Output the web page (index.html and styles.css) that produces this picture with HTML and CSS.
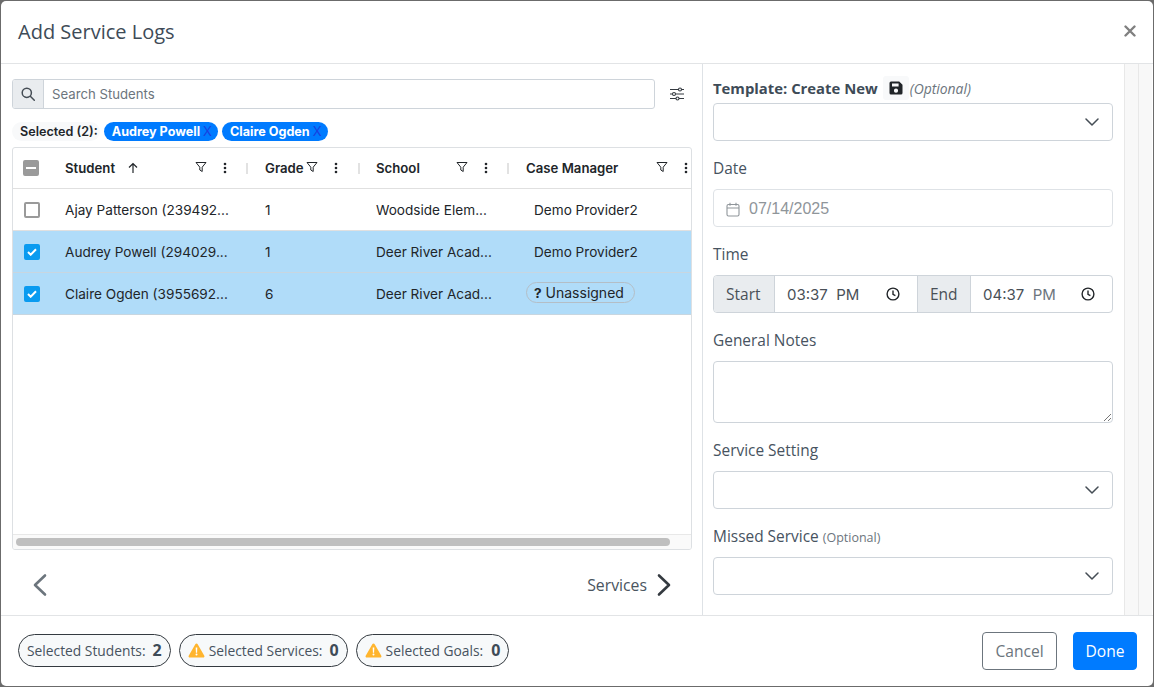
FILE: index.html
```html
<!DOCTYPE html>
<html lang="en">
<head>
<meta charset="utf-8">
<title>Add Service Logs</title>
<link rel="stylesheet" href="styles.css">
</head>
<body>
<div class="modal">
  <header class="modal-head">
    <h1>Add Service Logs</h1>
    <svg class="close" width="12" height="12" viewBox="0 0 12 12"><path d="M1.5 1.5l9 9M10.5 1.5l-9 9" stroke="#808080" stroke-width="2.4" stroke-linecap="round"/></svg>
  </header>
  <div class="modal-body">
    <section class="left">
      <div class="search-row">
        <div class="search">
          <span class="search-icon"><svg width="14" height="14" viewBox="0 0 14 14" fill="none" stroke="#454d55" stroke-width="1.5"><circle cx="5.8" cy="5.8" r="4.6"/><path d="M9.3 9.3l4 4" stroke-linecap="round"/></svg></span>
          <span class="search-input">Search Students</span>
        </div>
        <svg class="sliders" width="16" height="16" viewBox="0 0 16 16" fill="none" stroke="#343a40" stroke-width="1.1"><path d="M1 3.5h8.5M12.5 3.5H15M1 8h2.5M6.5 8H15M1 12.5h6M10 12.5h5"/><circle cx="11" cy="3.5" r="1.5"/><circle cx="5" cy="8" r="1.5"/><circle cx="8.5" cy="12.5" r="1.5"/></svg>
      </div>
      <div class="chips">
        <span class="chip-label">Selected (2):</span>
        <span class="chip">Audrey Powell<span class="chip-x">X</span></span>
        <span class="chip">Claire Ogden<span class="chip-x">X</span></span>
      </div>
      <div class="table">
        <div class="row head">
          <div class="cell check"><span class="box mixed"></span></div>
          <div class="cell student"><b>Student</b>
            <svg class="arrow" width="12" height="12" viewBox="0 0 12 12" fill="none" stroke="#212529" stroke-width="1.2"><path d="M6 11V1.5M2 5.5l4-4 4 4"/></svg>
            <svg class="funnel" width="12" height="12" viewBox="0 0 12 12" fill="none" stroke="#212529" stroke-width="1"><path d="M1 1.500h10L7.200 6.200V10.500L4.800 9V6.200z"/></svg>
            <svg class="dots" width="4" height="12" viewBox="0 0 4 12" fill="#212529"><circle cx="2" cy="2" r="1.3"/><circle cx="2" cy="6" r="1.3"/><circle cx="2" cy="10" r="1.3"/></svg>
            <i class="sep"></i></div>
          <div class="cell grade"><b>Grade</b>
            <svg class="funnel near" width="12" height="12" viewBox="0 0 12 12" fill="none" stroke="#212529" stroke-width="1"><path d="M1 1.500h10L7.200 6.200V10.500L4.800 9V6.200z"/></svg>
            <svg class="dots" width="4" height="12" viewBox="0 0 4 12" fill="#212529"><circle cx="2" cy="2" r="1.3"/><circle cx="2" cy="6" r="1.3"/><circle cx="2" cy="10" r="1.3"/></svg>
            <i class="sep"></i></div>
          <div class="cell school"><b>School</b>
            <svg class="funnel" width="12" height="12" viewBox="0 0 12 12" fill="none" stroke="#212529" stroke-width="1"><path d="M1 1.500h10L7.200 6.200V10.500L4.800 9V6.200z"/></svg>
            <svg class="dots" width="4" height="12" viewBox="0 0 4 12" fill="#212529"><circle cx="2" cy="2" r="1.3"/><circle cx="2" cy="6" r="1.3"/><circle cx="2" cy="10" r="1.3"/></svg>
            <i class="sep"></i></div>
          <div class="cell manager"><b>Case Manager</b>
            <svg class="funnel" width="12" height="12" viewBox="0 0 12 12" fill="none" stroke="#212529" stroke-width="1"><path d="M1 1.500h10L7.200 6.200V10.500L4.800 9V6.200z"/></svg>
            <svg class="dots" width="4" height="12" viewBox="0 0 4 12" fill="#212529"><circle cx="2" cy="2" r="1.3"/><circle cx="2" cy="6" r="1.3"/><circle cx="2" cy="10" r="1.3"/></svg>
          </div>
        </div>
        <div class="row">
          <div class="cell check"><span class="box"></span></div>
          <div class="cell student">Ajay Patterson (239492...</div>
          <div class="cell grade">1</div>
          <div class="cell school">Woodside Elem...</div>
          <div class="cell manager"><span class="provider">Demo Provider2</span></div>
        </div>
        <div class="row on">
          <div class="cell check"><span class="box checked"><svg width="10" height="8" viewBox="0 0 10 8" fill="none" stroke="#fff" stroke-width="2"><path d="M1 4l2.700 2.700L9 1.200"/></svg></span></div>
          <div class="cell student">Audrey Powell (294029...</div>
          <div class="cell grade">1</div>
          <div class="cell school">Deer River Acad...</div>
          <div class="cell manager"><span class="provider">Demo Provider2</span></div>
        </div>
        <div class="row on">
          <div class="cell check"><span class="box checked"><svg width="10" height="8" viewBox="0 0 10 8" fill="none" stroke="#fff" stroke-width="2"><path d="M1 4l2.700 2.700L9 1.200"/></svg></span></div>
          <div class="cell student">Claire Ogden (3955692...</div>
          <div class="cell grade">6</div>
          <div class="cell school">Deer River Acad...</div>
          <div class="cell manager"><span class="unassigned"><b>?</b> Unassigned</span></div>
        </div>
        <div class="spacer"></div>
        <div class="hscroll"><span class="thumb"></span></div>
      </div>
      <nav class="pager">
        <svg width="16" height="24" viewBox="0 0 16 24" fill="none" stroke="#6c757d" stroke-width="2.6" stroke-linecap="round" stroke-linejoin="round"><path d="M13 2.500L3 12l10 9.500"/></svg>
        <span class="next">Services
          <svg width="16" height="24" viewBox="0 0 16 24" fill="none" stroke="#343a40" stroke-width="2.6" stroke-linecap="round" stroke-linejoin="round"><path d="M3 2.500L13 12 3 21.500"/></svg>
        </span>
      </nav>
    </section>
    <section class="right">
      <div class="template-label">
        <strong>Template: Create New</strong>
        <span class="save"><svg width="14" height="14" viewBox="0 0 14 14"><path fill="#212529" fill-rule="evenodd" d="M2 .5h8.200L13.500 3.800V12a1.500 1.500 0 0 1-1.500 1.500H2A1.500 1.500 0 0 1 .5 12V2A1.500 1.500 0 0 1 2 .5zM3 2.400v3h6.600v-3zM7 7.600a2.100 2.100 0 1 0 0 4.200 2.100 2.100 0 0 0 0-4.200z"/></svg></span>
        <em>(Optional)</em>
      </div>
      <div class="select"><svg width="14" height="8" viewBox="0 0 14 8" fill="none" stroke="#454d55" stroke-width="1.5" stroke-linecap="round" stroke-linejoin="round"><path d="M1 1l6 6 6-6"/></svg></div>
      <label class="label">Date</label>
      <div class="field date">
        <svg width="14" height="15" viewBox="0 0 14 15" fill="none" stroke="#8f959a" stroke-width="1.1"><rect x="1" y="2.500" width="12" height="11.500" rx="1.500"/><path d="M1 6h12M4 .8v3M10 .8v3"/></svg>
        <span>07/14/2025</span>
      </div>
      <label class="label">Time</label>
      <div class="time">
        <span class="addon">Start</span>
        <span class="time-val"><span>03:37&nbsp; PM</span><svg width="14" height="14" viewBox="0 0 14 14" fill="none" stroke="#212529" stroke-width="1.4"><circle cx="7" cy="7" r="5.900"/><path d="M7 3.600V7.400l2.400 1.200"/></svg></span>
        <span class="addon end">End</span>
        <span class="time-val two"><span>04:37&nbsp; <span class="dim">PM</span></span><svg width="14" height="14" viewBox="0 0 14 14" fill="none" stroke="#212529" stroke-width="1.4"><circle cx="7" cy="7" r="5.900"/><path d="M7 3.600V7.400l2.400 1.200"/></svg></span>
      </div>
      <label class="label">General Notes</label>
      <div class="textarea"><svg width="8" height="8" viewBox="0 0 8 8" stroke="#666" stroke-width="0.9"><path d="M1 8l7-7M5 8l3-3"/></svg></div>
      <label class="label">Service Setting</label>
      <div class="select"><svg width="14" height="8" viewBox="0 0 14 8" fill="none" stroke="#454d55" stroke-width="1.5" stroke-linecap="round" stroke-linejoin="round"><path d="M1 1l6 6 6-6"/></svg></div>
      <label class="label">Missed Service <small>(Optional)</small></label>
      <div class="select"><svg width="14" height="8" viewBox="0 0 14 8" fill="none" stroke="#454d55" stroke-width="1.5" stroke-linecap="round" stroke-linejoin="round"><path d="M1 1l6 6 6-6"/></svg></div>
    </section>
    <div class="track"></div>
    <div class="track second"></div>
  </div>
  <footer class="modal-foot">
    <div class="pills">
      <span class="pill">Selected Students: <b>2</b></span>
      <span class="pill"><svg width="17" height="15" viewBox="0 0 17 15"><path fill="#ffb52e" d="M8.500.5c.5 0 .9.3 1.200.8l6.600 11.400c.5.900-.1 1.900-1.200 1.900H1.900C.8 14.600.2 13.600.7 12.700L7.300 1.300c.3-.5.7-.8 1.200-.8z"/><path fill="#fff" d="M7.700 4.500h1.600l-.2 5.200H7.900zM8.500 10.600a1 1 0 1 1 0 2 1 1 0 0 1 0-2z"/></svg>Selected Services: <b>0</b></span>
      <span class="pill"><svg width="17" height="15" viewBox="0 0 17 15"><path fill="#ffb52e" d="M8.500.5c.5 0 .9.3 1.200.8l6.600 11.400c.5.900-.1 1.900-1.200 1.900H1.900C.8 14.600.2 13.600.7 12.700L7.300 1.300c.3-.5.7-.8 1.200-.8z"/><path fill="#fff" d="M7.700 4.500h1.600l-.2 5.200H7.900zM8.500 10.600a1 1 0 1 1 0 2 1 1 0 0 1 0-2z"/></svg>Selected Goals: <b>0</b></span>
    </div>
    <div class="actions">
      <button class="btn cancel">Cancel</button>
      <button class="btn done">Done</button>
    </div>
  </footer>
</div>
</body>
</html>
```
FILE: styles.css
```css
* { box-sizing: border-box; }
html, body { margin: 0; height: 100%; }
body {
  width: 1154px; height: 687px; overflow: hidden;
  background: #6b6b6b; padding: 1px;
  font-family: "Open Sans", "Noto Sans", sans-serif; color: #212529;
}
.modal {
  width: 1152px; height: 685px; background: #fff; border-radius: 5px;
  display: flex; flex-direction: column; overflow: hidden;
}
.modal-head {
  height: 63px; flex: none; border-bottom: 1px solid #e2e4e6;
  display: flex; align-items: center; justify-content: space-between;
  padding: 0 17px 2px 17px;
}
h1 { margin: 0; font-size: 20px; font-weight: 400; color: #3e4b57; }
.modal-body { height: 551px; flex: none; display: flex; overflow: hidden; }
.left { width: 702px; flex: none; border-right: 1px solid #dee2e6; padding: 15px 10px 0 11px; }
.search-row { display: flex; align-items: center; gap: 14px; }
.search {
  flex: 1; height: 30px; display: flex; border: 1px solid #ced4da; border-radius: 3px; overflow: hidden;
}
.search-icon {
  width: 31px; background: #e9ecef; border-right: 1px solid #ced4da;
  display: flex; align-items: center; justify-content: center;
}
.search-input { font: 13.200px/28px Inter, sans-serif; color: #6c757d; padding-left: 8px; }
.sliders { flex: none; margin-right: 7px; }
.chips { display: flex; align-items: center; gap: 4px; height: 20px; margin: 12px 0 6px 0; }
.chip-label {
  font: 600 12.600px/19px Inter, sans-serif; background: #f8f9fa; padding: 0 2px 0 8px; border-radius: 10px; color: #212529;
}
.chip {
  font: 700 12.600px/19px Inter, sans-serif; color: #fff; background: #007bff; padding: 0 6px 0 8px;
  border-radius: 10px; height: 19px; white-space: nowrap;
}
.chip-x { color: #1a3fe0; font-weight: 400; font-size: 13px; margin-left: 3px; }
.table {
  width: 680px; height: 403px; border: 1px solid #dde0e3; border-radius: 3px;
  display: flex; flex-direction: column; font: 400 13.600px Inter, sans-serif; overflow: hidden;
}
.row {
  height: 42px; flex: none; display: grid; grid-template-columns: 40px 200px 111px 150px 1fr;
  border-bottom: 1px solid #e0e0e0; align-items: center;
}
.row.head { height: 41px; }
.row.on { background: #b0dcf9; border-bottom-color: #c8d6e0; }
.cell { display: flex; align-items: center; padding-left: 12px; height: 100%; position: relative; white-space: nowrap; }
.cell b { font-weight: 600; font-size: 13.200px; }
.check { padding-left: 11px; }
.head .check { padding-left: 10px; }
.box { width: 16px; height: 16px; border: 2px solid #9a9a9a; border-radius: 2px; background: #fff; display: flex; align-items: center; justify-content: center; }
.box.mixed { background: #9a9a9a; }
.box.mixed::after { content: ""; width: 10px; height: 2px; background: #fff; }
.box.checked { background: #0a9bf0; border-color: #0a9bf0; }
.arrow { margin-left: 12px; }
.funnel { position: absolute; left: 142px; top: 13px; }
.dots { position: absolute; left: 170px; top: 14px; }
.sep { position: absolute; left: 193px; top: 15px; width: 2px; height: 11px; background: #e2e2e2; }
.grade .funnel { left: 53px; }
.grade .dots { left: 81px; }
.grade .sep { left: 105px; }
.school .funnel { left: 92px; }
.school .dots { left: 120px; }
.school .sep { left: 143px; }
.manager .funnel { left: 142px; }
.manager .dots { left: 170px; }
.provider { padding-left: 8px; }
.unassigned {
  display: inline-block; border: 1px solid #b4bec6; border-radius: 11px; height: 21px; line-height: 19px;
  padding: 0 10px 0 7px; margin-bottom: 3px; font-size: 14px; color: #212529; font-family: Inter, sans-serif; white-space: nowrap;
}
.unassigned b { font-weight: 700; font-size: 13.600px; }
.spacer { flex: 1; }
.hscroll { height: 15px; flex: none; background: #fafafa; border-top: 1px solid #e8e8e8; padding: 3px 21px 0 3px; }
.thumb { display: block; height: 8px; border-radius: 4px; background: #bfbfbf; }
.pager { display: flex; justify-content: space-between; align-items: center; padding: 0 20px; height: 70px; }
.next { display: flex; align-items: center; gap: 9px; font-size: 15.800px; color: #4a5560; }
.right { width: 421px; flex: none; padding: 12px 11px 0 10px; overflow: hidden; }
.template-label { display: flex; align-items: center; height: 24px; color: #3e4b57; margin-bottom: 3px; }
.template-label strong { font-size: 14.850px; font-weight: 700; }
.save { width: 26px; height: 24px; background: #f8f9fa; border-radius: 3px; display: flex; align-items: center; justify-content: center; margin-left: 5px; }
.template-label em { font-size: 13.900px; color: #6c757d; margin-left: 1px; }
.select, .field, .textarea {
  height: 38px; border: 1px solid #ced4da; border-radius: 4px; background: #fff;
}
.select { display: flex; align-items: center; justify-content: flex-end; padding-right: 13px; }
.label { display: block; height: 20px; font-size: 15.450px; line-height: 20px; color: #47535f; margin: 17px 0 11px; }
.label small { font-size: 12.500px; color: #6c757d; }
.date { display: flex; align-items: center; gap: 9px; padding: 2px 0 0 12px; font: 400 16px "Liberation Sans", sans-serif; color: #8f959a; border-color: #dee2e6; }
.time { height: 38px; display: grid; grid-template-columns: 61px 142px 54px 1fr; border: 1px solid #ced4da; border-radius: 4px; overflow: hidden; font-size: 15.500px; }
.addon { background: #e9ecef; border-right: 1px solid #ced4da; display: flex; align-items: center; padding-left: 12px; color: #495057; }
.addon.end { border-left: 1px solid #ced4da; }
.time-val { display: flex; align-items: center; justify-content: space-between; padding: 0 17px 0 12px; color: #495057; font-family: Inter, sans-serif; font-size: 15px; }
.dim { color: #6c757d; }
.textarea { height: 62px; display: flex; align-items: flex-end; justify-content: flex-end; padding: 0 1px 1px 0; }
.track { width: 14px; flex: none; background: #f8f8f8; border-left: 1px solid #e8e8e8; }
.modal-foot {
  flex: 1; border-top: 1px solid #e2e4e6; display: flex; align-items: center; justify-content: space-between;
  padding: 0 16px 2px 17px;
}
.pills { display: flex; gap: 8px; }
.pill {
  height: 33px; border: 1px solid #343a40; border-radius: 17px; background: #f7f9fa;
  display: flex; align-items: center; padding: 0 8px; font-size: 13.800px; color: #47535f; white-space: nowrap;
}
.pill:last-child b { margin-left: 8px; }
.pill svg { margin-right: 4px; }
.pill b { font-size: 16px; font-weight: 700; margin-left: 7px; color: #3e4b57; }
.actions { display: flex; gap: 16px; margin-top: 1px; }
.btn { height: 38px; border-radius: 4px; font-family: "Open Sans", sans-serif; font-size: 15.600px; padding: 0; }
.cancel { width: 75px; background: #fff; border: 1px solid #6c757d; color: #6c757d; }
.done { width: 64px; background: #007bff; border: 1px solid #007bff; color: #fff; font-weight: 500; }
```
